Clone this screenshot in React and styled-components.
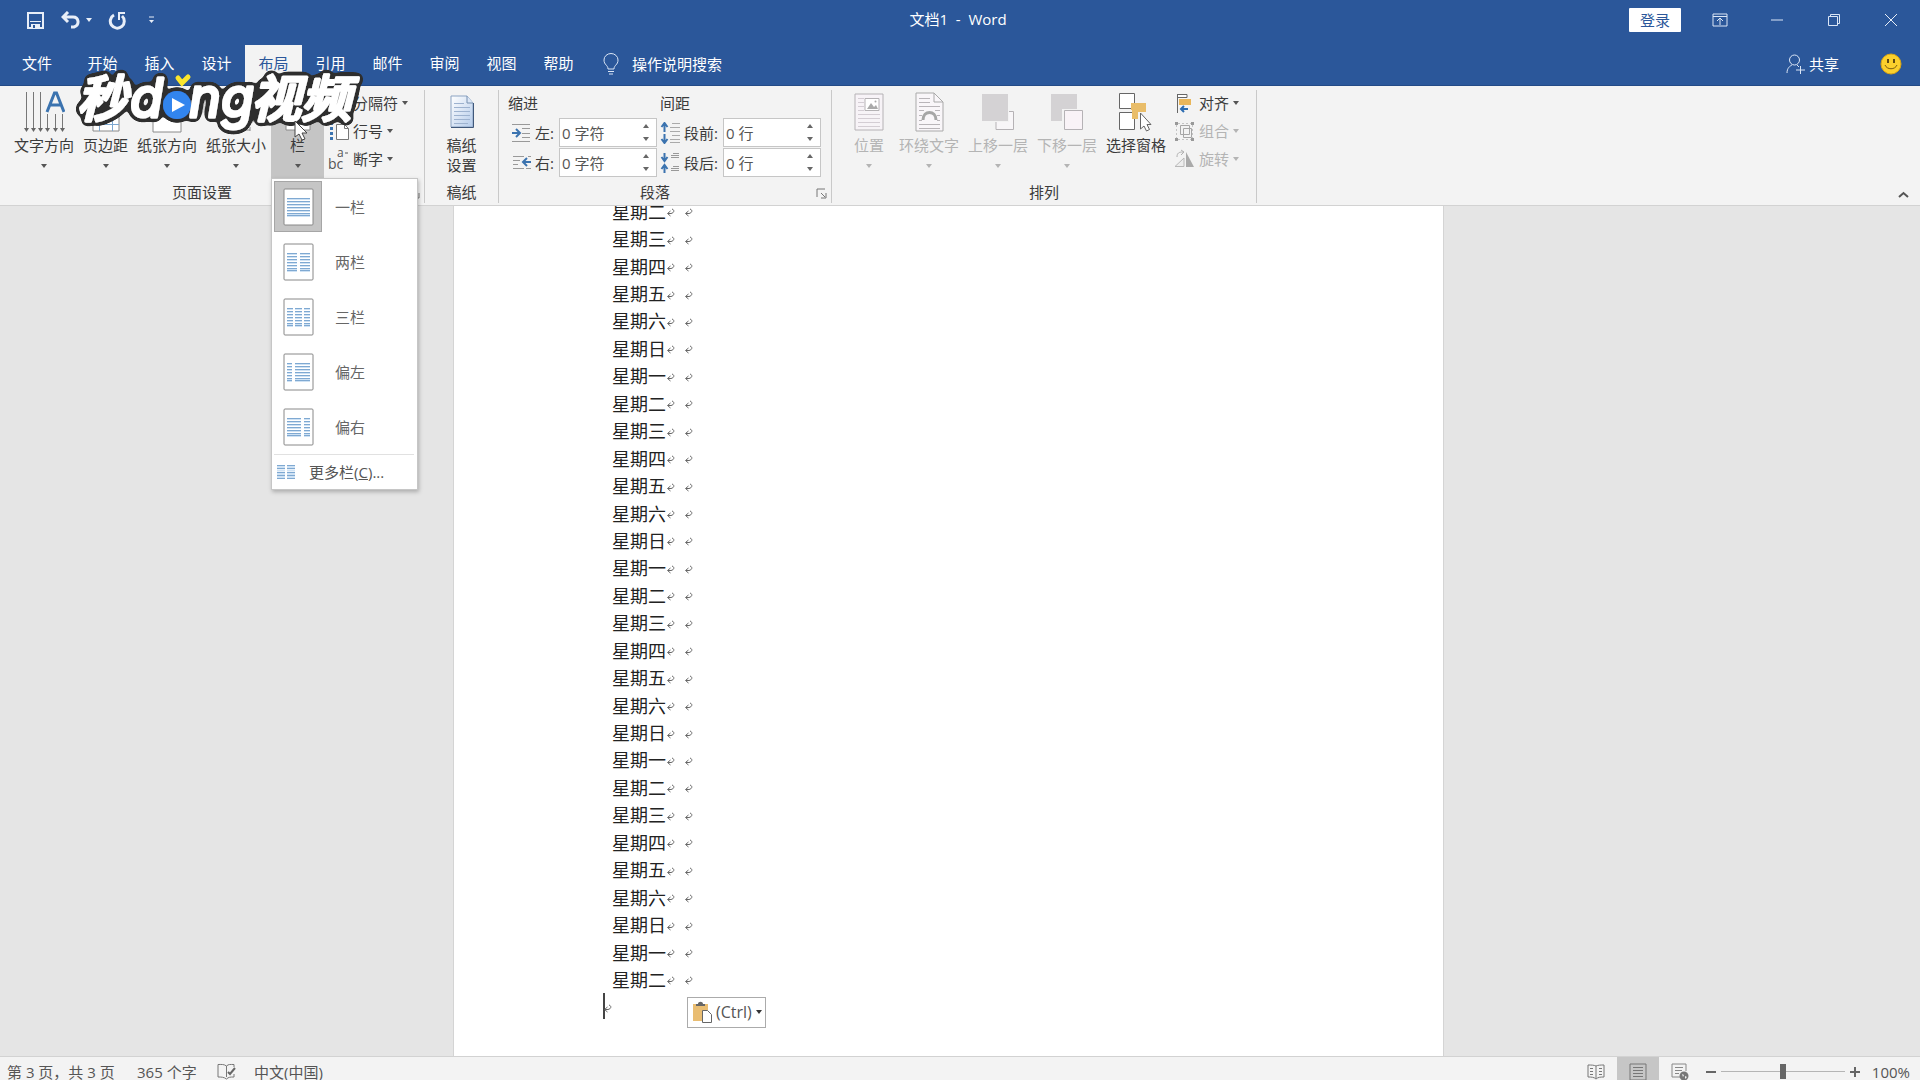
import React from 'react';
import styled, { createGlobalStyle } from 'styled-components';

const GlobalStyle = createGlobalStyle`
    * { box-sizing: border-box; }
    body {
        margin: 0;
        overflow: hidden;
        font-family: 'Open Sans', 'Noto Sans CJK SC', sans-serif;
        font-size: 15px;
        line-height: 20px;
        color: #3b3b3b;
    }
    button, input {
        font: inherit;
        color: inherit;
    }
    button {
        padding: 0;
        border: 0;
        background: none;
        white-space: nowrap;
    }
    svg { display: block; flex: none; }
`

const Window = styled.div`
    height: 100vh;
    display: flex;
    flex-direction: column;
    overflow: hidden;
    background: #e5e5e5;
`

const Header = styled.header`
    background: #2b579a;
    color: #fff;
    border-bottom: 1px solid #234a86;
`

const TitleBar = styled.div`
    height: 45px;
    display: grid;
    grid-template-columns: 1fr auto 1fr;
    padding-bottom: 5px;
    align-items: center;
`

const QuickAccess = styled.div`
    display: flex;
    align-items: center;
    padding-left: 26px;
    gap: 16px;

    button { display: flex; align-items: center; gap: 5px; }
`

const Title = styled.h1`
    margin: 0;
    padding: 0 4px 2px 0;
    font-size: 15px;
    font-weight: 400;
    white-space: pre;
`

const WindowButtons = styled.div`
    display: flex;
    justify-content: flex-end;
    align-items: center;
    padding-right: 1px;
`

const LoginButton = styled.button`
    width: 52px;
    height: 24px;
    margin-right: 10px;
    border-radius: 1px;
    background: #fff;
    color: #2b579a;
`

const WindowButton = styled.button`
    width: 57px;
    height: 40px;
    display: flex;
    align-items: center;
    justify-content: center;
`

const TabBar = styled.nav`
    display: flex;
    height: 40px;
    align-items: stretch;
`

const Tab = styled.button`
    width: ${props => (props.$wide ? '74px' : '57px')};
    padding-bottom: 4px;
    background: ${props => (props.$active ? '#f3f3f3' : 'transparent')};
    color: ${props => (props.$active ? '#2b579a' : '#fff')};
`

const TabTool = styled.button`
    display: flex;
    align-items: center;
    padding-bottom: 2px;
    gap: ${props => props.$gap};
    margin-left: ${props => (props.$right ? 'auto' : '16px')};
    margin-right: ${props => (props.$right ? '41px' : '0')};
`

const Smiley = styled.button`
    margin-right: 18px;
`

const Ribbon = styled.div`
    position: relative;
    z-index: 2;
    display: flex;
    height: 120px;
    background: #f3f3f3;
    border-bottom: 1px solid #d2d2d2;
`

const Group = styled.section`
    width: ${props => props.$width};
    display: flex;
    flex-direction: column;
    border-right: 1px solid transparent;
    border-image: linear-gradient(transparent 5px, #c9c9c9 5px, #c9c9c9 116px, transparent 116px) 1;
`

const GroupBody = styled.div`
    display: flex;
    height: 92px;
    gap: 1px;
    padding-left: ${props => props.$left || '0'};
    justify-content: ${props => (props.$center ? 'center' : 'flex-start')};
`

const GroupFooter = styled.div`
    display: flex;
    align-items: center;
    height: 27px;
    padding-top: 1px;

    span { flex: 1; text-align: center; }
    button { width: 20px; height: 14px; padding: 2px 4px 0 5px; }
`

const BigButton = styled.button`
    display: flex;
    flex-direction: column;
    align-items: center;
    min-width: ${props => props.$min || '50px'};
    height: 92px;
    padding: 5px 4px 0;
    background: ${props => (props.$open ? '#c5c5c5' : 'transparent')};
    color: ${props => (props.$off ? '#b4b4b4' : '#3b3b3b')};
`

const IconSlot = styled.span`
    display: flex;
    align-items: center;
    justify-content: center;
    height: 42px;
    margin-bottom: 2px;
`

const ArrowSlot = styled.span`
    display: flex;
    align-items: center;
    height: 22px;
`

const MenuHost = styled.div`
    position: relative;
`

const SmallColumn = styled.div`
    display: flex;
    flex-direction: column;
    padding: 3px 0 0 3px;
`

const SmallButton = styled.button`
    display: flex;
    align-items: center;
    height: 28px;
    gap: 4px;
    color: ${props => (props.$off ? '#b4b4b4' : '#3b3b3b')};

    > svg:first-child { margin-right: -1px; }
`

const Columns = styled.div`
    display: flex;
    gap: 3px;
    padding: 7px 0 0 9px;
`

const FieldColumn = styled.div`
    display: flex;
    flex-direction: column;
    gap: 1px;
`

const FieldHeader = styled.div`
    margin-bottom: 4px;
`

const Field = styled.div`
    display: flex;
    align-items: center;
    height: 29px;
    padding-left: ${props => props.$indent};

    label { width: ${props => props.$label}; padding-left: 4px; white-space: nowrap; }
`

const Spinner = styled.div`
    display: flex;
    width: 98px;
    height: 29px;
    border: 1px solid #c6c6c6;
    background: #fff;

    input {
        flex: 1;
        min-width: 0;
        padding: 0 2px;
        border: 0;
        outline: 0;
        background: none;
        color: #555;
    }
`

const SpinButtons = styled.div`
    width: 20px;
    display: grid;
    grid-template-rows: 1fr 1fr;

    button { display: flex; align-items: center; justify-content: center; }
`

const Collapse = styled.button`
    margin: auto 11px 7px auto;
`

const Menu = styled.div`
    position: absolute;
    top: 92px;
    left: 0;
    width: 147px;
    padding: 0 3px 0 2px;
    background: #fff;
    border: 1px solid #c6c6c6;
    box-shadow: 1px 2px 4px rgba(0, 0, 0, 0.25);
`

const MenuItem = styled.button`
    display: flex;
    align-items: center;
    width: 100%;
    height: 55px;
    gap: 13px;
    color: #666;
`

const Thumb = styled.span`
    display: flex;
    align-items: center;
    justify-content: center;
    width: 48px;
    height: 51px;
    border: 1px solid ${props => (props.$active ? '#a6a6a6' : 'transparent')};
    background: ${props => (props.$active ? '#c5c5c5' : 'transparent')};
`

const MoreItem = styled.button`
    display: flex;
    align-items: center;
    width: 100%;
    height: 35px;
    gap: 14px;
    padding-left: 3px;
    border-top: 1px solid #e1e1e1;
    color: #555;
`

const Workspace = styled.main`
    flex: 1;
    min-height: 0;
    display: flex;
    justify-content: center;
    padding-right: 23px;
    overflow: hidden;
`

const Page = styled.article`
    width: 991px;
    display: flex;
    flex-direction: column;
    padding-left: 149px;
    background: #fff;
    border: solid #d4d4d4;
    border-width: 0 1px;
`

/* the first line is scrolled partly under the ribbon */
const Lines = styled.div`
    flex: 1;
    display: flex;
    flex-direction: column;
    margin: -9px 0 36px;
    font-family: 'Noto Sans CJK SC', sans-serif;
    font-size: 18px;
    color: #222;
`

const Line = styled.div`
    position: relative;
    flex: 1;
    min-height: 0;
    display: flex;
    align-items: center;
    padding-left: ${props => (props.$last ? '0' : '9px')};

    svg { margin-top: 4px; }
    svg + svg { margin-left: 9px; }
`

const Caret = styled.i`
    width: 2px;
    height: 26px;
    margin-right: -2px;
    background: #444;
`

const PasteOptions = styled.button`
    position: absolute;
    left: 84px;
    top: 4px;
    display: flex;
    align-items: center;
    gap: 4px;
    width: 79px;
    height: 31px;
    padding-left: 4px;
    border: 1px solid #ababab;
    background: #fff;
    font-family: 'Open Sans', sans-serif;
    font-size: 16px;
    color: #555;

    svg { margin: 0; }
`

const StatusBar = styled.footer`
    height: 24px;
    overflow: hidden;
    background: #f3f3f3;
    border-top: 1px solid #d2d2d2;
`

const StatusRow = styled.div`
    display: flex;
    align-items: center;
    height: 29px;
    padding: 0 10px 0 7px;
    color: #555;
    white-space: nowrap;
`

const StatusText = styled.span`
    min-width: ${props => props.$min || '0'};
`

const ProofButton = styled.button`
    margin-right: 18px;
`

const Views = styled.div`
    display: flex;
    height: 100%;
    margin-left: auto;
`

const ViewButton = styled.button`
    display: flex;
    align-items: center;
    justify-content: center;
    width: 42px;
    background: ${props => (props.$active ? '#c6c6c6' : 'transparent')};
`

const Zoom = styled.div`
    display: flex;
    align-items: center;
    gap: 5px;
    margin: 0 12px 0 5px;
`

const ZoomSlider = styled.input`
    appearance: none;
    width: 124px;
    height: 16px;
    margin: 0;
    background: linear-gradient(#b5b5b5, #b5b5b5) center / 100% 1px no-repeat;

    &::-webkit-slider-thumb {
        appearance: none;
        width: 6px;
        height: 15px;
        background: #666;
    }
`

const Watermark = styled.svg`
    position: absolute;
    z-index: 3;
    left: 68px;
    top: 64px;
    pointer-events: none;
    font-family: 'Inter', 'Noto Sans CJK SC', sans-serif;
`

const Pointer = styled.svg`
    position: absolute;
    z-index: 4;
    left: 294px;
    top: 120px;
    pointer-events: none;
`

const Svg = ({ w, h, children, ...rest }) => (
    <svg width={w} height={h} viewBox={`0 0 ${w} ${h}`} fill="none" aria-hidden="true" {...rest}>{children}</svg>
)

const Arrow = ({ color = '#666', up }) => (
    <Svg w={6} h={4}><path d={up ? 'M0 4h6L3 0z' : 'M0 0h6L3 4z'} fill={color} /></Svg>
)

const Launcher = () => (
    <button aria-label="更多设置">
        <Svg w={11} h={11}><path d="M1 9V1h8M5 5l4 4M10 5v5H5" stroke="#777" /></Svg>
    </button>
)

const BLUE = '#3b73af'

const TextDirectionIcon = () => (
    <Svg w={42} h={42}>
        <path d="M3.500 1v37M10.500 1v37M17.500 1v37M24.500 23v15M32.500 23v15M39.500 23v15" stroke="#777" />
        <path d="M1 37h5l-2.500 4zM8 37h5l-2.500 4zM15 37h5l-2.500 4zM22 37h5l-2.500 4zM30 37h5l-2.500 4zM37 37h5l-2.500 4z" fill="#666" />
        <path d="M24 21L31.500 2h2L41 21M27 14h11" stroke={BLUE} strokeWidth="3" />
    </Svg>
)

const MarginsIcon = () => (
    <Svg w={28} h={40}>
        <path d="M1 1h26v38H1z" fill="#fff" stroke="#8a8a8a" />
        <path d="M7.500 1v38M20.500 1v38M1 8.500h26M1 32.500h26" stroke="#7da7cf" />
    </Svg>
)

const OrientationIcon = () => (
    <Svg w={30} h={42}>
        <path d="M1 3h20v28H1z" fill="#fff" stroke="#8a8a8a" />
        <path d="M1 18h28v23H1z" fill="#fff" stroke="#8a8a8a" />
    </Svg>
)

const SizeIcon = () => (
    <Svg w={32} h={40}>
        <path d="M1 4h22v30H1z" fill="#fff" stroke="#8a8a8a" />
        <path d="M14 38h16M14 35v4M30 35v4M26 8v24" stroke="#8a8a8a" />
    </Svg>
)

const ColumnsIcon = () => (
    <Svg w={26} h={40}>
        <path d="M1 2h24v36H1z" fill="#fff" stroke="#8a8a8a" />
        <path d="M4 10h8M4 16h8M4 22h8M4 28h8M14 10h8M14 16h8M14 22h8M14 28h8" stroke={BLUE} />
    </Svg>
)

const BreaksIcon = () => (
    <Svg w={22} h={20}>
        <path d="M5.500 1v6h12V1M5.500 19v-6h12v6" fill="#fff" stroke="#888" />
        <path d="M3 10h17" stroke={BLUE} strokeDasharray="2 2" />
    </Svg>
)

const LineNumberIcon = () => (
    <Svg w={22} h={20}>
        <path d="M3.500 1v18" stroke={BLUE} strokeWidth="3" strokeDasharray="3 2" />
        <path d="M8.500 3.500h8l4 4v11h-12z" fill="#fff" stroke="#777" />
        <path d="M16.500 3.500v4h4" stroke="#777" />
    </Svg>
)

/* "bc" with a hyphenated a above it */
const HyphenIcon = () => (
    <Svg w={22} h={22} fontFamily="Open Sans" fill="#555">
        <text x="0" y="21" fontSize="14">bc</text>
        <text x="9" y="9" fontSize="12">a</text>
        <path d="M17 5h3" stroke="#555" />
    </Svg>
)

const DraftIcon = () => (
    <Svg w={26} h={36}>
        <defs>
            <linearGradient id="sheet" x1="0" y1="0" x2="1" y2="1">
                <stop offset="0" stopColor="#fff" />
                <stop offset="1" stopColor="#b4cbea" />
            </linearGradient>
        </defs>
        <path d="M2 2h16l6 7v24H2z" fill="url(#sheet)" stroke="#8ba3c2" />
        <path d="M24.500 9v24.500H2" stroke="#40587a" />
        <path d="M18 2v7h6" fill="#dce7f6" stroke="#7690b0" />
        <path d="M5 9.500h10M5 13.500h16M5 17.500h16M5 21.500h16M5 25.500h16M5 29.500h14" stroke="#9db2cf" />
    </Svg>
)

const IndentIcon = ({ right }) => (
    <Svg w={20} h={20}>
        {right
            ? <><path d="M2 3.500h11M2 7.500h7M2 11.500h5M2 15.500h11M17 3.500h3M15 15.500h5" stroke="#999" /><path d="M20 9h-7M16 5l-4 4 4 4" stroke={BLUE} strokeWidth="2" /></>
            : <><path d="M1 1.500h18M11 5.500h8M11 10.500h8M11 14.500h8M1 18.500h18" stroke="#999" /><path d="M1 10h7M5 6l4 4-4 4" stroke={BLUE} strokeWidth="2" /></>}
    </Svg>
)

const SpacingIcon = ({ after }) => (
    <Svg w={20} h={22}>
        <path d={after ? 'M4.500 1v7M1.500 5l3 4 3-4M4.500 21v-7M1.500 17l3-4 3 4' : 'M4.500 10V2M1.500 5l3-4 3 4M4.500 12v8M1.500 17l3 4 3-4'} stroke={BLUE} strokeWidth="2" />
        {after
            ? <path d="M13 1.500h6M11 3.500h8M11 5.500h8M13 14.500h6M11 16.500h8M11 18.500h8" stroke="#999" />
            : <path d="M12 1.500h8M10 5.500h10M10 9.500h10M12 13.500h8M10 17.500h10M10 20.500h10" stroke="#aaa" />}
    </Svg>
)

const PositionIcon = () => (
    <Svg w={30} h={38}>
        <path d="M1 1h28v36H1z" fill="#f7f3f7" stroke="#b5b2b5" />
        <path d="M4 5.500h6M4 9.500h6M4 13.500h6M4 17.500h6M4 21.500h22M4 25.500h22M4 29.500h22M4 33.500h22" stroke="#d4cdd4" />
        <path d="M11 5.500h14v12H11z" fill="#fff" stroke="#b5b2b5" />
        <path d="M13 16l4-6 3 4 2-2 2 4z" fill="#aaa" />
        <circle cx="21.500" cy="8.500" r="1" fill="#aaa" />
    </Svg>
)

const WrapIcon = () => (
    <Svg w={29} h={40}>
        <path d="M1 1h18l9 9v29H1z" fill="#f9f6f9" stroke="#a9a9a9" />
        <path d="M19 1v9h9" stroke="#a9a9a9" />
        <path d="M4 6.500h11M4 10.500h11M4 14.500h21M4 18.500h5M20 18.500h5M4 23.500h3M22 23.500h3M4 28.500h3M22 28.500h3M4 32.500h21M4 36.500h21" stroke="#b9b5b9" />
        <path d="M8 28c0-10 13-10 13 0" stroke="#a6a6a6" strokeWidth="3" />
    </Svg>
)

const ForwardIcon = () => (
    <Svg w={34} h={38}>
        <path d="M15 18.500h17.500v18H15z" fill="#f8f6f8" stroke="#b5b2b5" />
        <path d="M0 0h28v29H0z" fill="#f3f3f3" />
        <path d="M1 1h26v27H1z" fill="#d4d2d4" />
    </Svg>
)

const BackwardIcon = () => (
    <Svg w={34} h={38}>
        <path d="M1 1h26v27H1z" fill="#d4d2d4" />
        <path d="M12 16h21v21H12z" fill="#f3f3f3" />
        <path d="M14.500 17.500h18v19h-18z" fill="#f9f3f7" stroke="#b5b2b5" />
    </Svg>
)

const SelectionIcon = () => (
    <Svg w={36} h={40}>
        <path d="M1.500 1.500h15v15h-15zM1.500 20.500h15v17h-15z" fill="#fff" stroke="#666" />
        <path d="M13 11h15v9h-8v7h-6V18h-1z" fill="#e9bd69" />
        <path d="M22.500 21v16l3.500-3 2.500 5 3-1.500-2.500-5h4z" fill="#fff" stroke="#666" />
    </Svg>
)

const AlignIcon = () => (
    <Svg w={22} h={20}>
        <path d="M3.500 1v19" stroke="#666" />
        <path d="M4 1.500h9v3H4" fill="#fff" stroke="#666" />
        <path d="M5 6h12v6H5z" fill="#e9b65a" />
        <path d="M14 16H7M10 13l-3 3 3 3" stroke="#2b6bb0" strokeWidth="2" />
    </Svg>
)

const GroupIcon = () => (
    <Svg w={22} h={20}>
        <path d="M6.500 4.500h9v9h-9zM9.500 7.500h8v9h-8z" stroke="#a6a6a6" />
        <path d="M1 1h3v3H1zM17 1h3v3h-3zM1 17h3v3H1zM17 17h3v3h-3z" fill="#999" />
        <path d="M2.500 4v13M18.500 4v13M4 2.500h13M4 18.500h13" stroke="#c4c4c4" strokeDasharray="2 2" />
    </Svg>
)

const RotateIcon = () => (
    <Svg w={22} h={20}>
        <path d="M1 17.500h9V9z" fill="#ededed" stroke="#b8b8b8" />
        <path d="M12 3v15h8z" fill="#aaa" />
        <path d="M3 8c0-4 2-5 6-5M7 1l3 2-3 3" stroke="#b0b0b0" />
    </Svg>
)

/* bars: [x, width] of every text column on the little sheet */
const LayoutThumb = ({ bars }) => (
    <Svg w={31} h={38}>
        <rect x="1" y="1" width="29" height="36" rx="1" fill="#fff" stroke="#888" strokeWidth="1" />
        {bars.map(([x, w]) => [10, 13, 16, 19, 22, 25, 27].map(y => (
            <React.Fragment key={`${x}-${y}`}>
                <rect x={x} y={y} width={w} height="2" fill="#cfe2f4" />
                <rect x={x} y={y} width={w} height="1" fill="#7fa9d2" />
            </React.Fragment>
        )))}
    </Svg>
)

const MoreIcon = () => (
    <Svg w={18} h={16}>
        <path d="M0 1.500h8M10 1.500h8M0 4.500h8M10 4.500h8M0 8.500h8M10 8.500h8M0 11.500h8M10 11.500h8M0 14.500h8M10 14.500h8" stroke="#7fa9d2" />
        <path d="M0 3h8M10 3h8M0 6.500h8M10 6.500h8M0 10h8M10 10h8M0 13h8M10 13h8" stroke="#cfe2f4" strokeWidth="2" />
    </Svg>
)

const ReturnMark = () => (
    <Svg w={9} h={9}>
        <path d="M6 1c3 1 2 4-1 4.500H2M4.500 3L1.500 5.500l3 2.500" stroke="#666" />
    </Svg>
)

const layouts = [
    { name: '一栏', bars: [[4, 23]] },
    { name: '两栏', bars: [[4, 10], [17, 10]] },
    { name: '三栏', bars: [[4, 6], [12, 7], [21, 6]] },
    { name: '偏左', bars: [[4, 5], [12, 15]] },
    { name: '偏右', bars: [[4, 14], [21, 6]] },
]

const tabs = ['文件', '开始', '插入', '设计', '布局', '引用', '邮件', '审阅', '视图', '帮助']

const days = ['日', '一', '二', '三', '四', '五', '六']
const lines = Array.from({ length: 29 }, (_, i) => `星期${days[(i + 2) % 7]}`)

const RibbonButton = ({ icon, label, off, open, noArrow, min }) => (
    <BigButton $off={off} $open={open} $min={min} disabled={off}>
        <IconSlot>{icon}</IconSlot>
        <span>{label}</span>
        {!noArrow && <ArrowSlot><Arrow color={off ? '#b4b4b4' : '#555'} /></ArrowSlot>}
    </BigButton>
)

const SmallRibbonButton = ({ icon, label, off }) => (
    <SmallButton $off={off} disabled={off}>
        {icon}
        <span>{label}</span>
        <Arrow color={off ? '#b4b4b4' : '#555'} />
    </SmallButton>
)

const SpinField = ({ id, icon, label, value, indent, labelWidth }) => (
    <Field $indent={indent} $label={labelWidth}>
        {icon}
        <label htmlFor={id}>{label}</label>
        <Spinner>
            <input id={id} type="text" defaultValue={value} />
            <SpinButtons>
                <button aria-label="增加"><Arrow up /></button>
                <button aria-label="减少"><Arrow /></button>
            </SpinButtons>
        </Spinner>
    </Field>
)

const TopBar = () => (
    <Header>
        <TitleBar>
            <QuickAccess>
                <button aria-label="保存">
                    <Svg w={19} h={19}><path d="M2 2h15v15H2z" stroke="#e8eef8" strokeWidth="2" /><path d="M4 10h11v1H4zM5 13h9v4H5z" fill="#e8eef8" /><path d="M7 14h2v3H7z" fill="#2b579a" /></Svg>
                </button>
                <button aria-label="撤消">
                    <Svg w={20} h={18}><path d="M7 1L2 6l5 5M3 6h9c6 0 7 8 1 10H10" stroke="#e8eef8" strokeWidth="3" /></Svg>
                    <Arrow color="#e8eef8" />
                </button>
                <button aria-label="恢复">
                    <Svg w={18} h={19}><path d="M6 4a7 7 0 1 0 8 1" stroke="#e8eef8" strokeWidth="3" /><path d="M17 2h-6v7" stroke="#e8eef8" strokeWidth="2" /></Svg>
                </button>
                <button aria-label="自定义快速访问工具栏">
                    <Svg w={18} h={8}><path d="M7 1h5" stroke="#e8eef8" /><path d="M7 4h5L9.500 7z" fill="#e8eef8" /></Svg>
                </button>
            </QuickAccess>
            <Title>文档1  -  Word</Title>
            <WindowButtons>
                <LoginButton>登录</LoginButton>
                <WindowButton aria-label="功能区显示选项">
                    <Svg w={16} h={14}><path d="M1 1h14v12H1zM1 3.500h14M8 12V6M5 8l3-3 3 3" stroke="#dbe6f6" /></Svg>
                </WindowButton>
                <WindowButton aria-label="最小化">
                    <Svg w={12} h={2}><path d="M0 1h12" stroke="#dbe6f6" /></Svg>
                </WindowButton>
                <WindowButton aria-label="还原">
                    <Svg w={14} h={14}><path d="M1.500 3.500h9v9h-9zM3.500 3V1.500h9v9H11" stroke="#dbe6f6" /></Svg>
                </WindowButton>
                <WindowButton aria-label="关闭">
                    <Svg w={14} h={14}><path d="M1 1l12 12M13 1L1 13" stroke="#e8eef8" /></Svg>
                </WindowButton>
            </WindowButtons>
        </TitleBar>
        <TabBar>
            {tabs.map((tab, i) => <Tab key={tab} $wide={i === 0} $active={tab === '布局'}>{tab}</Tab>)}
            <TabTool $gap="13px">
                <Svg w={16} h={22}><path d="M5 16c0-4-4-4-4-9a7 6.500 0 0 1 14 0c0 5-4 5-4 9zM5 18.500h6M6 21h4" stroke="#dbe6f6" /></Svg>
                <span>操作说明搜索</span>
            </TabTool>
            <TabTool $gap="4px" $right>
                <Svg w={19} h={20}><circle cx="8.500" cy="6" r="5" stroke="#dbe6f6" /><path d="M1 19c0-5 3-7 5-8M11 11l2 2M14.500 12v8M10 16h9" stroke="#dbe6f6" /></Svg>
                <span>共享</span>
            </TabTool>
            <Smiley aria-label="反馈">
                <Svg w={22} h={24}><circle cx="11" cy="11" r="10" fill="#fbd02c" stroke="#d9a514" /><path d="M8 6v4M14 6v4" stroke="#5f4a12" strokeWidth="2" /><path d="M5 12c2 5 10 5 12 0" stroke="#7a5c10" strokeWidth="1" /></Svg>
            </Smiley>
        </TabBar>
    </Header>
)

const ColumnsMenu = () => (
    <Menu>
        {layouts.map((item, i) => (
            <MenuItem key={item.name}>
                <Thumb $active={i === 0}><LayoutThumb bars={item.bars} /></Thumb>
                <span>{item.name}</span>
            </MenuItem>
        ))}
        <MoreItem>
            <MoreIcon />
            <span>更多栏(<u>C</u>)...</span>
        </MoreItem>
    </Menu>
)

const LayoutRibbon = () => (
    <Ribbon>
        <Group $width="425px">
            <GroupBody $left="10px">
                <RibbonButton icon={<TextDirectionIcon />} label="文字方向" />
                <RibbonButton icon={<MarginsIcon />} label="页边距" />
                <RibbonButton icon={<OrientationIcon />} label="纸张方向" />
                <RibbonButton icon={<SizeIcon />} label="纸张大小" />
                <MenuHost>
                    <RibbonButton icon={<ColumnsIcon />} label="栏" min="53px" open />
                    <ColumnsMenu />
                </MenuHost>
                <SmallColumn>
                    <SmallRibbonButton icon={<BreaksIcon />} label="分隔符" />
                    <SmallRibbonButton icon={<LineNumberIcon />} label="行号" />
                    <SmallRibbonButton icon={<HyphenIcon />} label="断字" />
                </SmallColumn>
            </GroupBody>
            <GroupFooter><span>页面设置</span><Launcher /></GroupFooter>
        </Group>
        <Group $width="74px">
            <GroupBody $center>
                <RibbonButton icon={<DraftIcon />} label={<>稿纸<br />设置</>} noArrow />
            </GroupBody>
            <GroupFooter><span>稿纸</span></GroupFooter>
        </Group>
        <Group $width="333px">
            <GroupBody>
                <Columns>
                    <FieldColumn>
                        <FieldHeader>缩进</FieldHeader>
                        <SpinField id="left" icon={<IndentIcon />} label="左:" value="0 字符" indent="3px" labelWidth="28px" />
                        <SpinField id="right" icon={<IndentIcon right />} label="右:" value="0 字符" indent="3px" labelWidth="28px" />
                    </FieldColumn>
                    <FieldColumn>
                        <FieldHeader>间距</FieldHeader>
                        <SpinField id="before" icon={<SpacingIcon />} label="段前:" value="0 行" indent="0" labelWidth="43px" />
                        <SpinField id="after" icon={<SpacingIcon after />} label="段后:" value="0 行" indent="0" labelWidth="43px" />
                    </FieldColumn>
                </Columns>
            </GroupBody>
            <GroupFooter><span>段落</span><Launcher /></GroupFooter>
        </Group>
        <Group $width="425px">
            <GroupBody $left="12px">
                <RibbonButton icon={<PositionIcon />} label="位置" off />
                <RibbonButton icon={<WrapIcon />} label="环绕文字" off />
                <RibbonButton icon={<ForwardIcon />} label="上移一层" off />
                <RibbonButton icon={<BackwardIcon />} label="下移一层" off />
                <RibbonButton icon={<SelectionIcon />} label="选择窗格" noArrow />
                <SmallColumn>
                    <SmallRibbonButton icon={<AlignIcon />} label="对齐" />
                    <SmallRibbonButton icon={<GroupIcon />} label="组合" off />
                    <SmallRibbonButton icon={<RotateIcon />} label="旋转" off />
                </SmallColumn>
            </GroupBody>
            <GroupFooter><span>排列</span></GroupFooter>
        </Group>
        <Collapse aria-label="折叠功能区">
            <Svg w={11} h={7}><path d="M1 6l4.500-4L10 6" stroke="#555" strokeWidth="2" /></Svg>
        </Collapse>
    </Ribbon>
)

const Document = () => (
    <Workspace>
        <Page>
            <Lines>
                {lines.map((text, i) => (
                    <Line key={i}>{text}<ReturnMark /><ReturnMark /></Line>
                ))}
                <Line $last>
                    <Caret />
                    <ReturnMark />
                    <PasteOptions>
                        <Svg w={20} h={22}>
                            <path d="M1 3h15v17H1z" fill="#e9bd72" />
                            <path d="M4 5V3h2c0-3 5-3 5 0h2v2z" fill="#666" />
                            <path d="M10.500 9.500h5l4 4v8h-9z" fill="#fff" stroke="#666" />
                        </Svg>
                        <span>(Ctrl)</span>
                        <Arrow color="#333" />
                    </PasteOptions>
                </Line>
            </Lines>
        </Page>
    </Workspace>
)

const Status = () => (
    <StatusBar>
        <StatusRow>
            <StatusText $min="130px">第 3 页，共 3 页</StatusText>
            <StatusText $min="80px">365 个字</StatusText>
            <ProofButton aria-label="校对">
                <Svg w={19} h={18}><path d="M9.500 14V3C7 1 4 1.500 1 1.500V14c3 0 6 0 8.500 2 2-2 4-2 7.500-2v-3M9.500 3c2-2 4-1.500 7.500-1.500V4" stroke="#777" /><path d="M11 9l2 2 5-6" stroke="#666" strokeWidth="2" /></Svg>
            </ProofButton>
            <StatusText>中文(中国)</StatusText>
            <Views>
                <ViewButton aria-label="阅读视图">
                    <Svg w={18} h={16}><path d="M9 14V2C7 1 4 1 1 1v12c3 0 6 0 8 2 2-2 5-2 8-2V1c-3 0-6 0-8 1M3 4.500h3M3 7.500h3M3 10.500h3M12 4.500h3M12 7.500h3M12 10.500h3" stroke="#777" /></Svg>
                </ViewButton>
                <ViewButton aria-label="页面视图" $active>
                    <Svg w={18} h={18}><path d="M1 1h16v16H1zM4 4.500h10M4 7.500h10M4 10.500h10M4 13.500h10" stroke="#777" /></Svg>
                </ViewButton>
                <ViewButton aria-label="Web 版式视图">
                    <Svg w={18} h={18}><path d="M9 14H1V1h14v7M4 4.500h8M4 7.500h7M4 10.500h4" stroke="#888" /><circle cx="13" cy="13" r="4.500" fill="#777" /><path d="M11 11l2 1-1 2zM14 13l2 1-2 2z" fill="#f3f3f3" /></Svg>
                </ViewButton>
            </Views>
            <Zoom>
                <button aria-label="缩小"><Svg w={10} h={10}><path d="M0 5h10" stroke="#666" strokeWidth="2" /></Svg></button>
                <ZoomSlider type="range" min="0" max="100" defaultValue="50" aria-label="显示比例" />
                <button aria-label="放大"><Svg w={10} h={10}><path d="M0 5h10M5 0v10" stroke="#666" strokeWidth="2" /></Svg></button>
            </Zoom>
            <StatusText>100%</StatusText>
        </StatusRow>
    </StatusBar>
)

const VideoLogo = () => (
    <Watermark width="300" height="84" viewBox="0 0 300 84">
        <defs>
            <filter id="outline" x="-5%" y="-20%" width="110%" height="140%">
                <feGaussianBlur in="SourceAlpha" stdDeviation="3" />
                <feComponentTransfer><feFuncA type="linear" slope="24" intercept="-2" /></feComponentTransfer>
                <feComposite in2="SourceAlpha" operator="over" result="fat" />
                <feFlood floodColor="#2d2d2d" />
                <feComposite in2="fat" operator="in" />
                <feMerge><feMergeNode /><feMergeNode in="SourceGraphic" /></feMerge>
            </filter>
        </defs>
        <g filter="url(#outline)" fill="#fff" stroke="#fff" strokeWidth="3" strokeLinejoin="round" fontStyle="italic">
            <text x="9" y="53" fontSize="50" fontWeight="500">秒</text>
            <text x="62" y="53" fontSize="54" fontWeight="400">d</text>
            <circle cx="109" cy="41" r="14" stroke="none" fill="#3385ee" />
            <text x="121" y="53" fontSize="54" fontWeight="400">ng</text>
            <text x="183" y="53" fontSize="50" fontWeight="500">视频</text>
        </g>
        <path d="M104 34v14l13-7z" fill="#fff" />
        <path d="M110 14l4 5 6-6" stroke="#fbe62d" strokeWidth="5" strokeLinecap="round" fill="none" />
    </Watermark>
)

const App = () => {

    return (
        <Window>
            <GlobalStyle />
            <TopBar />
            <LayoutRibbon />
            <Document />
            <Status />
            <VideoLogo />
            <Pointer width="14" height="22" viewBox="0 0 14 22" aria-hidden="true">
                <path d="M1 1v16l4-3 3 6 3-1-3-6h5z" fill="#fff" stroke="#444" />
            </Pointer>
        </Window>
    )}

export default App;
